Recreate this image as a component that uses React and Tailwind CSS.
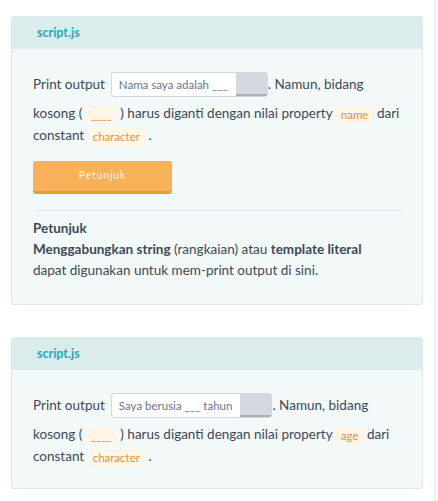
const pill = 'inline-block rounded-[5px] bg-[#fff6e8] px-[5px] leading-[18px] text-[11.5px] text-[#e0924a] align-middle';

function Blank({ text }) {
  return (
    <span className="inline-flex h-[25px] items-stretch overflow-hidden rounded-[3px] border border-[#d3d8de] bg-white align-middle">
      <span className="flex items-center pl-[7px] pr-[8px] text-[11.5px] text-[#6b7489]">{text}</span>
      <span className="w-[31px] border-b-2 border-[#a9b0b8] bg-[#d3d9df]" />
    </span>
  );
}

function Card({ input, prop, children, className }) {
  return (
    <div className={'rounded-[3px] border border-[#dde9e9] bg-[#f3f8f8] ' + className}>
      <div className="flex h-[32px] items-center bg-[#daecec] pl-[25px] text-[12.5px] font-bold text-[#2aa8b9]">
        script.js
      </div>
      <div className="px-[21px] pt-[23px] text-[13.5px] text-[#3b4a58]">
        <div className="flex h-[25px] items-center whitespace-nowrap">
          <span>Print output</span>
          <span className="ml-[6px]"><Blank text={input} /></span>
          <span>. Namun, bidang</span>
        </div>
        <div className="mt-[5px] whitespace-nowrap leading-[22px]">
          <div>
            kosong ( <span className={pill}>____</span> ) harus diganti dengan nilai property{' '}
            <span className={pill}>{prop}</span> dari
          </div>
          <div>
            constant <span className={pill}>character</span> .
          </div>
        </div>
        {children}
      </div>
    </div>
  );
}

export default function App() {
  return (
    <div className="min-h-screen w-[438px] bg-white font-['Lato',sans-serif]">
      <div className="min-h-screen w-[436px] border-r-2 border-[#efefef] px-[11px] pt-[16px]">
        <Card input="Nama saya adalah ___" prop="name" className="pb-[23px]">
          <button className="mt-[15px] h-[33px] w-[139px] rounded-[3px] border-b-[3px] border-[#f09a2c] bg-[#f6b15a] text-[10.5px] tracking-[0.08em] text-[#fef5e6]">
            Petunjuk
          </button>
          <div className="mt-[16px] border-t border-[#dde9ea]" />
          <div className="pt-[7px] leading-[21px]">
            <div className="font-bold">Petunjuk</div>
            <div>
              <b>Menggabungkan string</b> (rangkaian) atau <b>template literal</b>
            </div>
            <div>dapat digunakan untuk mem-print output di sini.</div>
          </div>
        </Card>
        <Card input="Saya berusia ___ tahun" prop="age" className="mt-[32px] pb-[21px]" />
      </div>
    </div>
  );
}
